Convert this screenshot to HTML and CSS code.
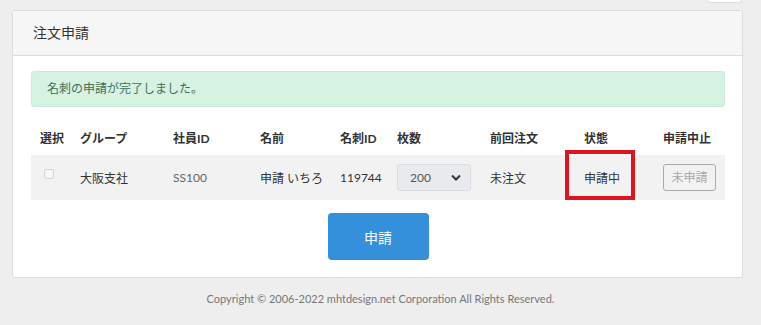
FILE: index.html
```html
<!DOCTYPE html>
<html lang="ja">
<head>
  <meta charset="UTF-8">
  <title>注文申請</title>
  <link rel="stylesheet" href="styles.css">
</head>
<body>
  <div class="topbar"><span class="mini"></span></div>

  <div class="card">
    <div class="card-head">注文申請</div>
    <div class="card-body">
      <div class="alert">名刺の申請が完了しました。</div>

      <div class="grid head">
        <div>選択</div>
        <div>グループ</div>
        <div>社員ID</div>
        <div>名前</div>
        <div>名刺ID</div>
        <div>枚数</div>
        <div>前回注文</div>
        <div>状態</div>
        <div>申請中止</div>
      </div>
      <div class="grid row">
        <div><span class="check"></span></div>
        <div>大阪支社</div>
        <div class="muted">SS100</div>
        <div class="clip"><span>申請 いちろう</span></div>
        <div>119744</div>
        <div>
          <div class="select">
            <span>200</span>
            <svg width="10" height="7" viewBox="0 0 10 7"><path d="M1 1.5 L5 5.5 L9 1.5" fill="none" stroke="#333" stroke-width="2"/></svg>
          </div>
        </div>
        <div>未注文</div>
        <div class="status">申請中<span class="mark"></span></div>
        <div><span class="btn-off">未申請</span></div>
      </div>

      <div class="actions">
        <button class="submit">申請</button>
      </div>
    </div>
  </div>

  <footer>Copyright © 2006-2022 mhtdesign.net Corporation All Rights Reserved.</footer>
</body>
</html>
```

FILE: styles.css
```css
body {
  margin: 0;
  background: #eeeeee;
  color: #333;
  font-family: Lato, "Noto Sans CJK JP", sans-serif;
  font-size: 12px;
}
.topbar {
  height: 10px;
  display: flex;
  justify-content: flex-end;
  padding-right: 19px;
}
.mini {
  width: 33px;
  height: 2px;
  background: #fff;
  border: 1px solid #ddd;
  border-top: none;
  border-radius: 0 0 3px 3px;
}
.card {
  margin: 0 18px 0 12px;
  background: #fff;
  border: 1px solid #dddddd;
  border-radius: 3px;
}
.card-head {
  height: 44px;
  line-height: 44px;
  padding-left: 20px;
  background: #f6f6f6;
  border-bottom: 1px solid #dcdcdc;
  font-size: 14px;
  color: #333;
}
.card-body {
  padding: 15px 17px 17px 18px;
}
.alert {
  height: 34px;
  line-height: 34px;
  padding-left: 15px;
  background: #d5f2e3;
  border: 1px solid #c9ecd9;
  border-radius: 3px;
  color: #3f6f55;
}
.grid {
  display: grid;
  grid-template-columns: 40px 93px 87px 80px 57px 93px 94px 79px 71px;
  align-items: center;
}
.grid > div {
  padding-left: 9px;
}
.head {
  margin-top: 12px;
  height: 36px;
  font-weight: bold;
}
.row {
  height: 45px;
  background: #f2f2f2;
}
.check {
  display: block;
  margin-left: 4px;
  margin-top: -8px;
  width: 8px;
  height: 8px;
  border: 1px solid #d6d6d6;
  border-radius: 2px;
  background: #f7f7f7;
}
.muted {
  color: #666;
}
.row > .clip {
  padding-right: 7px;
}
.clip span {
  display: block;
  white-space: nowrap;
  overflow: hidden;
}
.select {
  display: flex;
  align-items: center;
  justify-content: space-between;
  padding: 0 9px 0 12px;
  box-sizing: border-box;
  width: 74px;
  height: 27px;
  border: 1px solid #dadde0;
  border-radius: 3px;
  background: #e8eaed;
  color: #555;
}
.status {
  position: relative;
  align-self: stretch;
  display: flex;
  align-items: center;
}
.mark {
  position: absolute;
  left: -10px;
  top: -5px;
  width: 70px;
  height: 50px;
  box-sizing: border-box;
  border: 4px solid #e0141e;
}
.btn-off {
  display: inline-block;
  width: 53px;
  height: 27px;
  line-height: 25px;
  box-sizing: border-box;
  border: 1px solid #aaa;
  border-radius: 3px;
  text-align: center;
  color: #aaa;
}
.actions {
  display: flex;
  justify-content: center;
  margin-top: 13px;
}
.submit {
  width: 101px;
  height: 47px;
  border: none;
  border-radius: 4px;
  background: #3590dc;
  color: #fff;
  font-family: inherit;
  font-size: 14px;
}
footer {
  text-align: center;
  padding-top: 14px;
  font-size: 11px;
  color: #777;
}
```
